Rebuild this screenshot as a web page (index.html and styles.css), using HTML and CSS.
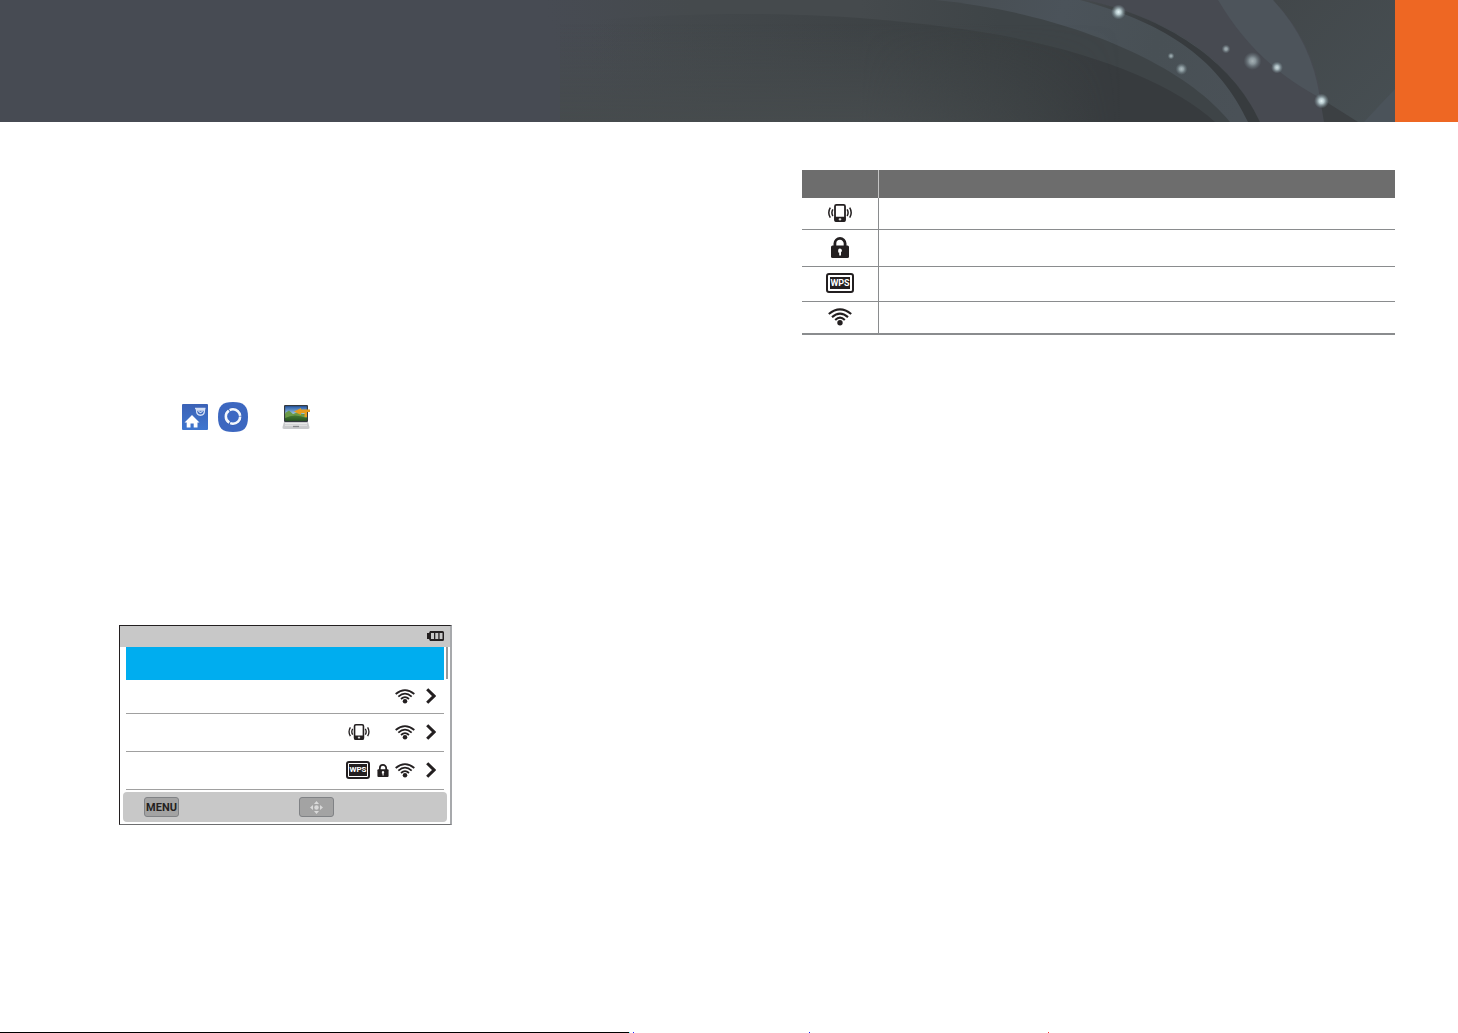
FILE: index.html
```html
<!DOCTYPE html>
<html lang="en">
<head>
<meta charset="utf-8">
<title>Network connection</title>
<link rel="stylesheet" href="styles.css">
</head>
<body>
<svg class="sprite" aria-hidden="true">
  <symbol id="phone" viewBox="0 0 24 18">
    <rect x="7" y="0.9" width="10" height="16.2" rx="1.4" fill="#fff" stroke="#231f20" stroke-width="1.8"/>
    <path d="M6.500 12.800h11v3.400q0 1.600-1.600 1.600H8.100q-1.600 0-1.600-1.600z" fill="#231f20"/>
    <path d="M12 14v2.600M10.700 15.300h2.600" stroke="#fff" stroke-width=".9"/>
    <path d="M4.900 5.400q-2 3.300 0 6.600M2.300 3.700q-3 5 0 10M19.100 5.400q2 3.300 0 6.600M21.700 3.700q3 5 0 10" fill="none" stroke="#231f20" stroke-width="1.500"/>
  </symbol>
  <symbol id="lock" viewBox="0 0 18 21">
    <path d="M3.900 10V6.500a5.100 5.100 0 0 1 10.200 0V10" fill="none" stroke="#231f20" stroke-width="2.800"/>
    <rect y="8.500" width="18" height="12.500" rx="1.500" fill="#231f20"/>
    <path d="M9 11.500a2 2 0 0 1 1 3.700V18.500H8.200V15.500H7.200V12.700Q7.700 11.500 9 11.500z" fill="#fff"/>
  </symbol>
  <symbol id="wifi" viewBox="0 0 24 18">
    <circle cx="12" cy="14.800" r="2.700" fill="#231f20"/>
    <path d="M.8 6Q12-3.200 23.200 6M4 9.100Q12 2.100 20 9.100M7.200 12Q12 7.400 16.800 12" fill="none" stroke="#231f20" stroke-width="2.100"/>
  </symbol>
  <symbol id="chevron" viewBox="0 0 10 16">
    <path d="M1.200 1.300 8 8l-6.800 6.700" fill="none" stroke="#231f20" stroke-width="3"/>
  </symbol>
</svg>

<header class="banner">
  <div class="banner-art">
    <svg width="855" height="122" viewBox="540 0 855 122" aria-hidden="true">
      <defs>
        <linearGradient id="fade" gradientUnits="userSpaceOnUse" x1="550" y1="30" x2="690" y2="0">
          <stop offset="0" stop-color="#454a4d" stop-opacity="0"/>
          <stop offset="1" stop-color="#454a4d"/>
        </linearGradient>
        <linearGradient id="leaf" gradientUnits="userSpaceOnUse" x1="590" y1="0" x2="1100" y2="0">
          <stop offset="0" stop-color="#41464a" stop-opacity="0"/>
          <stop offset=".4" stop-color="#404548"/>
          <stop offset=".85" stop-color="#393e40"/>
          <stop offset="1" stop-color="#373b3e"/>
        </linearGradient>
        <linearGradient id="haze" x1="0" y1="0" x2="0" y2="1">
          <stop offset="0" stop-color="#464b4d" stop-opacity="0"/>
          <stop offset="1" stop-color="#464b4d"/>
        </linearGradient>
        <linearGradient id="hazeEdge" gradientUnits="userSpaceOnUse" x1="860" y1="0" x2="1120" y2="0">
          <stop offset="0" stop-color="#fff"/>
          <stop offset="1" stop-color="#000"/>
        </linearGradient>
        <mask id="hazeMask" maskUnits="userSpaceOnUse" x="540" y="0" width="855" height="122">
          <path d="M540 0H1395V122H540z" fill="url(#hazeEdge)"/>
        </mask>
        <linearGradient id="band" gradientUnits="userSpaceOnUse" x1="860" y1="0" x2="1240" y2="110">
          <stop offset="0" stop-color="#454a4d"/>
          <stop offset=".5" stop-color="#4b535a"/>
          <stop offset=".75" stop-color="#485055"/>
          <stop offset="1" stop-color="#4a5157"/>
        </linearGradient>
        <linearGradient id="inner" gradientUnits="userSpaceOnUse" x1="860" y1="0" x2="1000" y2="0">
          <stop offset="0" stop-color="#454a4d"/>
          <stop offset="1" stop-color="#3e4447"/>
        </linearGradient>
        <linearGradient id="stripe" gradientUnits="userSpaceOnUse" x1="1080" y1="0" x2="1160" y2="30">
          <stop offset="0" stop-color="#454a4d"/>
          <stop offset="1" stop-color="#373b3e"/>
        </linearGradient>
        <linearGradient id="side" x1="0" y1="0" x2="1" y2="1">
          <stop offset="0" stop-color="#42474a"/>
          <stop offset="1" stop-color="#474f53"/>
        </linearGradient>
        <radialGradient id="spark">
          <stop offset="0" stop-color="#e6f6f8"/>
          <stop offset=".35" stop-color="#c2d6da" stop-opacity=".9"/>
          <stop offset="1" stop-color="#7f959c" stop-opacity="0"/>
        </radialGradient>
      </defs>
      <path d="M540 0H1395V122H540z" fill="url(#fade)"/>
      <path d="M860 0H1085Q1215 28 1260 122H860z" fill="url(#band)"/>
      <path d="M860 0H935C1060 12 1180 60 1230 122H860z" fill="url(#inner)"/>
      <path d="M580 21C750 7 880 15 1000 35C1100 54 1175 85 1215 122H580z" fill="url(#leaf)"/>
      <path d="M560 24H1140V122H560z" fill="url(#haze)" mask="url(#hazeMask)"/>
      <path d="M1085 0H1395V122H1260Q1215 28 1085 0z" fill="#474a51"/>
      <path d="M1080 0H1086C1165 17 1232 60 1260 122H1248C1220 62 1170 24 1080 0z" fill="url(#stripe)"/>
      <path d="M1273 0H1395V122H1324Q1320 48 1273 0z" fill="url(#side)"/>
      <path d="M1218 0H1273Q1312 42 1320 98C1275 74 1243 42 1218 0z" fill="#4d545b"/>
      <path d="M1320 98 1358 122H1324z" fill="#3c4043"/>
      <path d="M1364 122Q1377 108 1395 89V122z" fill="#4b535a"/>
      <g fill="url(#spark)">
        <circle cx="1118.500" cy="12" r="7.500"/>
        <circle cx="1171" cy="56" r="3.500" opacity=".6"/>
        <circle cx="1181.500" cy="69" r="6" opacity=".65"/>
        <circle cx="1226" cy="49" r="4.500" opacity=".6"/>
        <circle cx="1252.500" cy="61" r="9" opacity=".6"/>
        <circle cx="1277" cy="67.500" r="6" opacity=".85"/>
        <circle cx="1321.500" cy="101" r="7.500"/>
      </g>
    </svg>
  </div>
  <div class="banner-tab"></div>
</header>

<main class="columns">
  <section class="left">
    <div class="apps">
      <svg class="app-home" width="26" height="26" viewBox="0 0 26 26" role="img" aria-label="Home sync">
        <defs><linearGradient id="blue" x1="0" y1="0" x2="0" y2="1"><stop offset="0" stop-color="#3b62b6"/><stop offset="1" stop-color="#3f76cf"/></linearGradient></defs>
        <rect width="26" height="26" rx="1" fill="url(#blue)"/>
        <path d="M10 11 17.500 18.500H15.500V23.500H11.700V19.500H8.500V23.500H4.700V18.500H2.500z" fill="#fff"/>
        <path d="M13 4.500H23.500M14.500 6C14.500 13 22.500 13 22.500 6zM16.500 7Q18.500 10 20.500 7" fill="none" stroke="#d3dff5" stroke-width="1.300"/>
      </svg>
      <svg class="app-link" width="30" height="30" viewBox="0 0 30 30" role="img" aria-label="Link">
        <path d="M15 0C26 0 30 4 30 15S26 30 15 30 0 26 0 15 4 0 15 0z" fill="#3c67c0"/>
        <circle cx="15" cy="14.500" r="9" fill="#2f58ad"/>
        <circle cx="15" cy="14.500" r="7.200" fill="#3d69c3" stroke="#f4f8fd" stroke-width="2.600" stroke-dasharray="14.200 .880"/>
      </svg>
      <svg width="28" height="26" viewBox="0 0 28 26" role="img" aria-label="PC auto backup">
        <defs><linearGradient id="sky" x1="0" y1="0" x2="0" y2="1"><stop offset="0" stop-color="#2559a8"/><stop offset=".5" stop-color="#9bc2dc"/><stop offset=".55" stop-color="#4d7f37"/><stop offset="1" stop-color="#28571f"/></linearGradient></defs>
        <rect x="2" y="1" width="24" height="17" rx="1" fill="#343a40"/>
        <rect x="3.200" y="2.200" width="21.600" height="14.600" fill="url(#sky)"/>
        <path d="M3.200 9 7 6.500 11 10 15 8.500 24.800 11V14Q12 9 3.200 14z" fill="#6b9a48"/>
        <path d="M12 7.500 19 4V5.500H28V8H25V13H22.500V9H19V11z" fill="#e79d1d"/>
        <path d="M2 18H26L27.500 23Q28 25 26 25H2Q0 25 .5 23z" fill="#c9cacc"/>
        <path d="M3 19.500H25M3 21.200H25" stroke="#f1f1f1" stroke-width=".8"/>
        <path d="M11 22.500H17" stroke="#85878a" stroke-width="1.300"/>
      </svg>
    </div>

    <div class="screen">
      <div class="screen-title">
        <svg width="17" height="10" viewBox="0 0 17 10" role="img" aria-label="Battery full">
          <path d="M3 0H15.500Q17 0 17 1.500V8.500Q17 10 15.500 10H3L2 8H0V2H2z" fill="#231f20"/>
          <path d="M4 2H7V8H4zM8.300 2H11.300V8H8.300zM12.600 2H15.500V8H12.600z" fill="#c8c8c8"/>
        </svg>
      </div>
      <div class="screen-body">
        <ul class="networks">
          <li class="network selected"></li>
          <li class="network first">
            <svg class="i-wifi"><use href="#wifi"/></svg>
            <svg class="i-chevron"><use href="#chevron"/></svg>
          </li>
          <li class="network">
            <svg class="i-phone"><use href="#phone"/></svg>
            <svg class="i-wifi"><use href="#wifi"/></svg>
            <svg class="i-chevron"><use href="#chevron"/></svg>
          </li>
          <li class="network">
            <span class="wps wps-small">WPS</span>
            <svg class="i-lock"><use href="#lock"/></svg>
            <svg class="i-wifi"><use href="#wifi"/></svg>
            <svg class="i-chevron"><use href="#chevron"/></svg>
          </li>
        </ul>
        <div class="scroll-thumb"></div>
      </div>
      <div class="screen-keys">
        <button class="key" type="button">MENU</button>
        <button class="key" type="button" aria-label="Navigate">
          <svg width="13" height="13" viewBox="0 0 13 13" fill="#d9d9d9">
            <circle cx="6.500" cy="6.500" r="2.200"/>
            <path d="M6.500 0 9 3H4zM6.500 13 4 10H9zM0 6.500 3 4V9zM13 6.500 10 9V4z"/>
          </svg>
        </button>
      </div>
    </div>
  </section>

  <section class="right">
    <table class="legend">
      <thead>
        <tr><th scope="col" class="icon-col" aria-label="Icon"></th><th scope="col" aria-label="Description"></th></tr>
      </thead>
      <tbody>
        <tr class="row-s"><td><svg class="l-wide"><use href="#phone"/></svg></td><td></td></tr>
        <tr class="row-l"><td><svg class="l-lock"><use href="#lock"/></svg></td><td></td></tr>
        <tr class="row-m"><td><span class="wps">WPS</span></td><td></td></tr>
        <tr class="row-s"><td><svg class="l-wide"><use href="#wifi"/></svg></td><td></td></tr>
      </tbody>
    </table>
  </section>
</main>

<footer class="page-end"></footer>
</body>
</html>
```

FILE: styles.css
```css
* { box-sizing: border-box; }

body {
  margin: 0;
  min-height: 100vh;
  display: flex;
  flex-direction: column;
  background: #fff;
  font-family: Roboto, "Liberation Sans", Arial, sans-serif;
}

svg { display: block; flex: none; }
.sprite { position: absolute; width: 0; height: 0; }

.banner { display: flex; height: 122px; }
.banner-art {
  flex: 1;
  display: flex;
  justify-content: flex-end;
  overflow: hidden;
  background: #474b53;
}
.banner-tab { width: 63px; background: #ee6723; }

.columns {
  flex: 1;
  display: grid;
  grid-template-columns: 683fr 593fr;
  align-items: start;
  padding: 0 63px 0 119px;
}

.left { padding-top: 280px; }
.right { padding-top: 48px; }

.apps {
  display: flex;
  align-items: center;
  height: 30px;
  padding-left: 63px;
  margin-bottom: 193px;
}
.app-home { margin-right: 10px; }
.app-link { margin-right: 34px; }

/* Camera screen */
.screen {
  width: 333px;
  max-width: 100%;
  border: 1px solid #231f20;
  border-right: 2px solid #a7a9ac;
  border-bottom-color: #6d6e70;
}
.screen-title {
  display: flex;
  align-items: center;
  justify-content: flex-end;
  height: 21px;
  padding: 0 6px 1px 0;
  background: #c8c8c8;
}
.screen-body { display: flex; padding-left: 6px; }
.networks {
  flex: 1;
  margin: 0;
  padding: 0;
  list-style: none;
}
.network {
  display: flex;
  align-items: center;
  justify-content: flex-end;
  height: 38px;
  padding: 0 8px 1px 0;
  border-bottom: 1px solid #a0a0a0;
}
.network.selected { height: 33px; border: 0; background: #00adef; }
.network.first { height: 34px; }
.scroll-thumb {
  width: 2px;
  height: 32px;
  margin: 0 2px;
  background: #97999b;
}

.i-wifi { width: 20px; height: 15px; }
.i-chevron { width: 10px; height: 16px; margin-left: 11px; }
.i-phone { width: 22px; height: 16px; margin-right: 25px; }
.i-lock { width: 12px; height: 13px; margin-right: 6px; }

/* WPS badge: dark plate inside a white gap and a dark frame */
.wps {
  display: block;
  width: 28px;
  height: 20px;
  margin: 0 auto;
  border: 2px solid #231f20;
  border-radius: 3px;
  padding: 2px;
  background: #231f20 content-box;
  color: #fff;
  font-size: 9px;
  font-weight: 700;
  line-height: 12px;
  text-align: center;
}
.wps-small {
  width: 24px;
  height: 18px;
  margin: 0 7px 0 0;
  padding: 1px;
  font-size: 8px;
}

.screen-keys {
  display: flex;
  align-items: center;
  gap: 120px;
  height: 30px;
  margin: 2px 3px;
  padding-left: 21px;
  border-radius: 4px;
  background: #c8c8c8;
}
.key {
  display: flex;
  align-items: center;
  justify-content: center;
  width: 35px;
  height: 20px;
  padding: 0;
  border: 1px solid #808285;
  border-radius: 3px;
  background: #a3a3a3;
  color: #231f20;
  font: 700 11px Roboto, "Liberation Sans", Arial, sans-serif;
}

/* Icon legend */
.legend {
  width: 100%;
  border-collapse: separate;
  border-spacing: 0;
  table-layout: fixed;
  border-bottom: 1px solid #8a8c8e;
}
.legend th { height: 28px; padding: 0; background: #6d6d6d; }
.legend .icon-col { width: 77px; border-right: 1px solid #c4c4c4; }
.legend td {
  padding: 0 0 2px;
  border-bottom: 1px solid #8a8c8e;
  vertical-align: middle;
}
.legend td:first-child { border-right: 1px solid #8a8c8e; }
.legend td svg { margin: 0 auto; }
.row-s { height: 32px; }
.row-m { height: 35px; }
.row-l { height: 37px; }
.l-wide { width: 24px; height: 18px; }
.l-lock { width: 18px; height: 21px; }

/* Closing rule, followed by three colour ticks */
.page-end {
  height: 1px;
  background: linear-gradient(90deg,
    #000 629px, #6ff 629px 630px, transparent 630px 633px,
    #22f 633px 634px, transparent 634px 809px,
    #22f 809px 810px, transparent 810px 1048px,
    #f33 1048px 1049px, transparent 1049px);
}
```
